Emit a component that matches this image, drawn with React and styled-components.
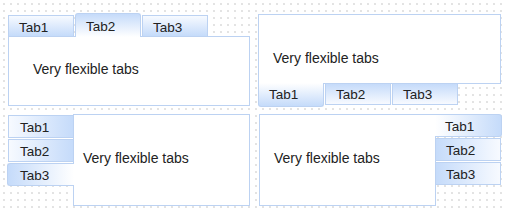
import React from 'react';
import styled, { createGlobalStyle, css } from 'styled-components';

const GlobalStyle = createGlobalStyle`
  html, body {
    margin: 0;
    padding: 0;
    background: #fff;
  }
  body {
    font-family: "Liberation Sans", Arial, sans-serif;
  }
`;

const BORDER = '#bcd2f2';
const BLUE = '#c5dbfa';
const PALE = '#f7faff';

const Page = styled.div`
  width: 507px;
  height: 210px;
  box-sizing: border-box;
  background-color: #fff;
  background-image: radial-gradient(circle at 1px 1px, #cfcfcf 0.5px, transparent 1px);
  background-size: 7px 7px;
  background-position: 3px 3px;
  padding: 13px 0 0 8px;
  display: grid;
  grid-template-columns: 242px 243px;
  grid-template-rows: 94px 92px;
  column-gap: 8px;
  row-gap: 7px;
  align-items: start;
`;

const directions = {
  top: 'column',
  bottom: 'column-reverse',
  left: 'row',
  right: 'row-reverse',
};

const Panel = styled.div`
  display: flex;
  flex-direction: ${(p) => directions[p.$side]};
  margin-top: ${(p) => p.$offset || 0}px;
`;

const Content = styled.div`
  flex: none;
  box-sizing: border-box;
  width: ${(p) => p.$w}px;
  height: ${(p) => p.$h}px;
  background: #fff;
  border: 1px solid ${BORDER};
  display: flex;
  align-items: center;
  padding: ${(p) => p.$pad};
  font-size: 14px;
  color: #222;
`;

const Strip = styled.div`
  display: flex;
  gap: 1px;
  ${(p) =>
    p.$side === 'top' &&
    css`
      height: 23px;
      align-items: flex-end;
    `}
  ${(p) =>
    p.$side === 'bottom' &&
    css`
      align-items: flex-start;
    `}
  ${(p) =>
    p.$side === 'left' &&
    css`
      flex-direction: column;
      width: 65px;
      padding-top: 1px;
      align-items: flex-end;
    `}
  ${(p) =>
    p.$side === 'right' &&
    css`
      flex-direction: column;
      width: 65px;
      align-items: flex-start;
    `}
`;

// gradient goes from the outer edge of the tab toward the content side
const gradientTo = { top: 'bottom', bottom: 'top', left: 'right', right: 'left' };

const Tab = styled.div`
  position: relative;
  box-sizing: border-box;
  font-size: 13.5px;
  color: #222;
  white-space: nowrap;
  border: 1px solid ${BORDER};
  background: linear-gradient(
    to ${(p) => gradientTo[p.$side]},
    ${(p) => (p.$active ? `${BLUE}, #fff` : `${PALE}, ${BLUE}`)}
  );
  ${(p) => p.$active && 'z-index: 1;'}

  ${(p) =>
    (p.$side === 'top' || p.$side === 'bottom') &&
    css`
      width: 66px;
      height: ${p.$active ? 24 : 21}px;
      padding-left: 10px;
      display: flex;
      align-items: center;
    `}
  ${(p) =>
    p.$side === 'top' &&
    css`
      border-bottom: none;
      padding-top: 2px;
      ${p.$active && 'margin-bottom: -1px; border-radius: 3px 3px 0 0;'}
    `}
  ${(p) =>
    p.$side === 'bottom' &&
    css`
      border-top: none;
      padding-bottom: ${p.$active ? 1 : 0}px;
      ${p.$active && 'margin-top: -1px; border-radius: 0 0 3px 3px;'}
    `}

  ${(p) =>
    (p.$side === 'left' || p.$side === 'right') &&
    css`
      height: 23px;
      width: ${p.$active ? 67 : 65}px;
      display: flex;
      align-items: center;
      padding-top: 1px;
    `}
  ${(p) =>
    p.$side === 'left' &&
    css`
      border-right: none;
      padding-left: ${p.$active ? 12 : 11}px;
      ${p.$active && 'margin-right: -1px; border-radius: 3px 0 0 3px;'}
    `}
  ${(p) =>
    p.$side === 'right' &&
    css`
      border-left: none;
      padding-left: 10px;
      ${p.$active && 'margin-left: -1px; border-radius: 0 3px 3px 0;'}
    `}
`;

const TabPane = ({ side, active, w, h, pad, offset }) => (
  <Panel $side={side} $offset={offset}>
    <Strip $side={side}>
      {['Tab1', 'Tab2', 'Tab3'].map((t, i) => (
        <Tab key={t} $side={side} $active={i === active}>
          {t}
        </Tab>
      ))}
    </Strip>
    <Content $w={w} $h={h} $pad={pad}>
      Very flexible tabs
    </Content>
  </Panel>
);

export default function App() {
  return (
    <>
      <GlobalStyle />
      <Page>
        <TabPane side="top" active={1} w={242} h={70} pad="0 0 5px 24px" />
        <TabPane side="bottom" active={0} w={243} h={70} pad="17px 0 0 14px" offset={1} />
        <TabPane side="left" active={2} w={177} h={92} pad="0 0 5px 9px" />
        <TabPane side="right" active={0} w={177} h={92} pad="0 0 5px 14px" />
      </Page>
    </>
  );
}
